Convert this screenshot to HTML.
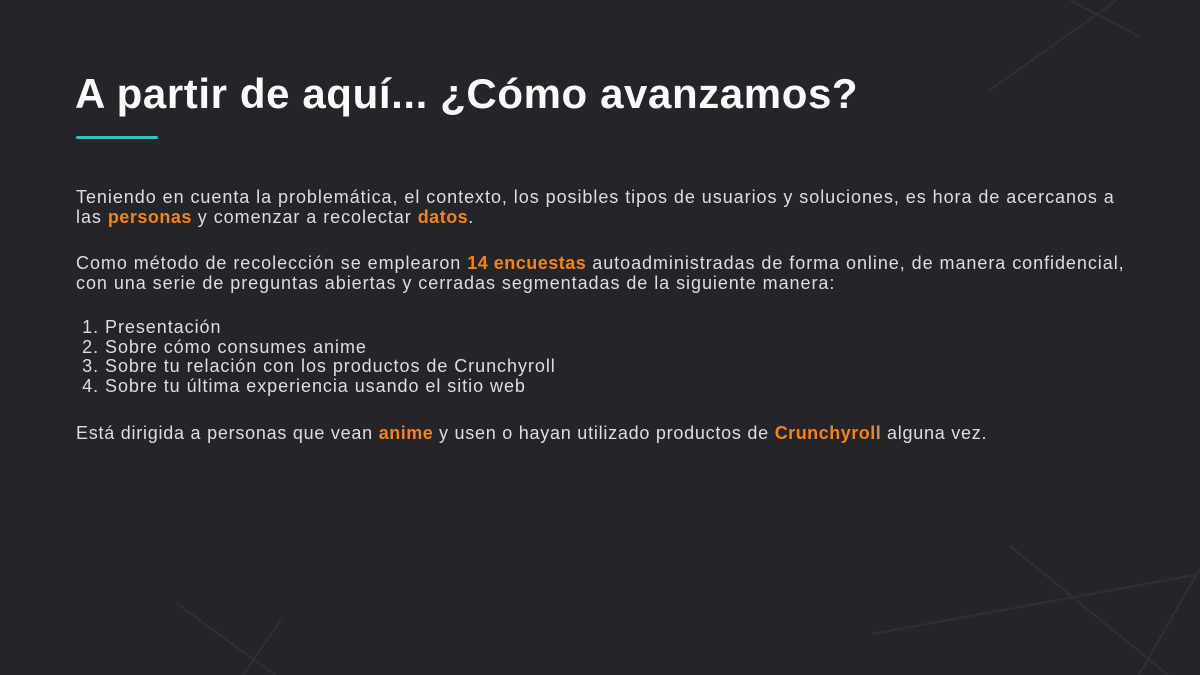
<!DOCTYPE html>
<html><head><meta charset="utf-8"><style>
html,body{margin:0;padding:0}
body{width:1200px;height:675px;background:#24252b;position:relative;overflow:hidden;font-family:"Liberation Sans",sans-serif}
svg{position:absolute;left:0;top:0}
h1{position:absolute;left:75px;top:70px;margin:0;font-size:42px;font-weight:bold;color:#fafafa;letter-spacing:0.6px;white-space:nowrap}
.bar{position:absolute;left:76px;top:136px;width:82px;height:3px;background:#27c6c9;border-radius:2px}
.t{position:absolute;left:76px;color:#dedede;font-size:18px;letter-spacing:0.95px;line-height:19.6px;white-space:nowrap}
.o{color:#f7821b;font-weight:bold;letter-spacing:0.5px}
ol{margin:0;padding-left:29px}
</style></head><body>
<svg width="1200" height="675">
<g stroke="#2e2f38" stroke-width="2" fill="none">
<line x1="990" y1="90" x2="1117" y2="0"/>
<line x1="1070" y1="0" x2="1142" y2="38"/>
<line x1="176" y1="603" x2="275" y2="675"/>
<line x1="281" y1="620" x2="243" y2="675"/>
<line x1="1010" y1="546" x2="1168" y2="675"/>
<line x1="872" y1="634" x2="1200" y2="574"/>
<line x1="1200" y1="568" x2="1139" y2="675"/>
</g></svg>
<h1>A partir de aquí... ¿Cómo avanzamos?</h1>
<div class="bar"></div>
<div class="t" style="top:188px">Teniendo en cuenta la problemática, el contexto, los posibles tipos de usuarios y soluciones, es hora de acercanos a<br>las <span class="o">personas</span> y comenzar a recolectar <span class="o">datos</span>.</div>
<div class="t" style="top:254px">Como método de recolección se emplearon <span class="o">14 encuestas</span> autoadministradas de forma online, de manera confidencial,<br>con una serie de preguntas abiertas y cerradas segmentadas de la siguiente manera:</div>
<div class="t" style="top:318px;letter-spacing:0.95px"><ol>
<li>Presentación</li><li>Sobre cómo consumes anime</li><li>Sobre tu relación con los productos de Crunchyroll</li><li>Sobre tu última experiencia usando el sitio web</li></ol></div>
<div class="t" style="top:424px;letter-spacing:0.75px">Está dirigida a personas que vean <span class="o">anime</span> y usen o hayan utilizado productos de <span class="o">Crunchyroll</span> alguna vez.</div>
</body></html>
